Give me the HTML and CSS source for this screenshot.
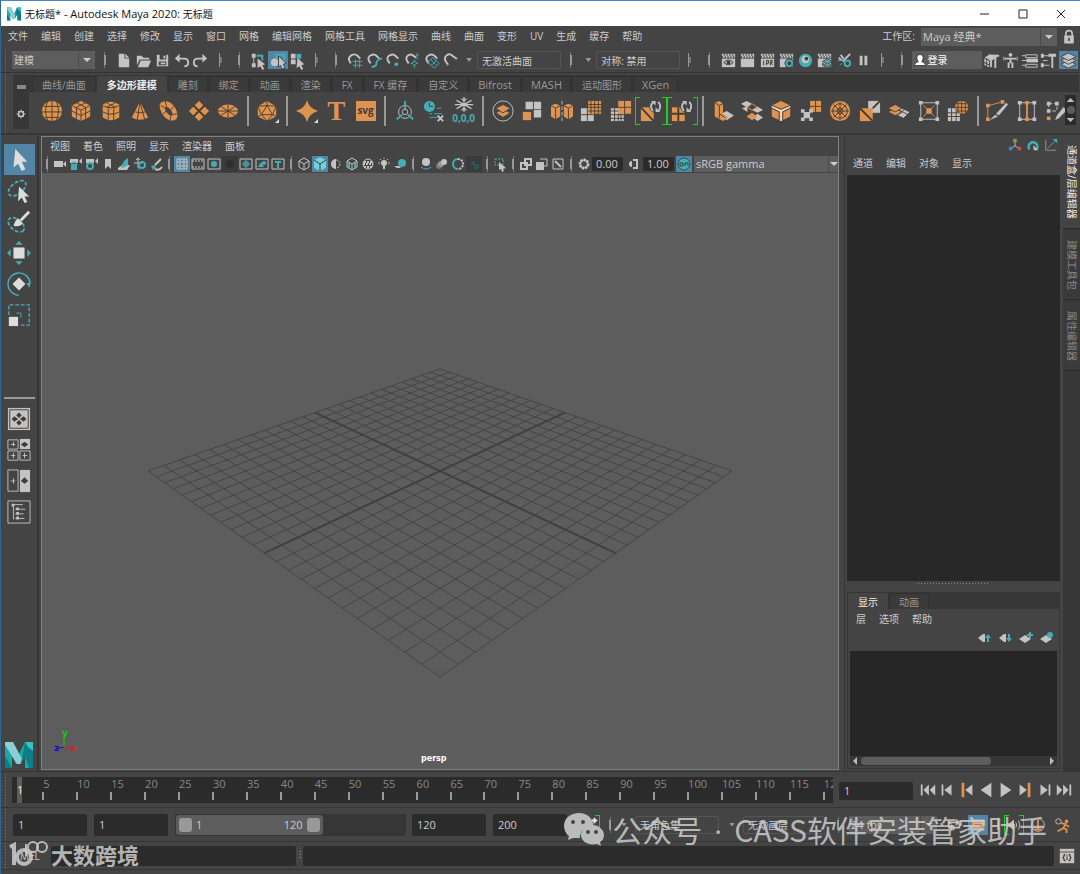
FILE: index.html
```html
<!DOCTYPE html>
<html lang="zh-CN">
<head>
    <meta charset="UTF-8">
    <meta name="viewport" content="width=device-width, initial-scale=1.0">
    <title>无标题* - Autodesk Maya 2020: 无标题</title>
    <link rel="stylesheet" href="styles.css">
</head>
<body>

<!-- icon set -->
<svg class="defs" aria-hidden="true">
    <symbol id="mlogo" viewBox="0 0 28 26"><path fill="#1aa7a8" d="M0 0h8l6 12 6-12h8v26h-8V14l-4 8h-5l-4-8v12H0z"/><path fill="#8fcdd6" d="M0 0h8l9 17-2 5h-3L0 3z"/><path fill="#0c7f86" d="M20 0l8 6v20h-4l-4-12-4 8zM0 14l7 12H0z"/><path fill="#35c3c0" d="M20 0h8v9l-5-4z"/></symbol>

    <!-- status line, 20x20 -->
    <symbol id="new" viewBox="0 0 20 20"><path class="g" d="M5 3h6v5h5v9H5zM12 3l4 4h-4z"/></symbol>
    <symbol id="open" viewBox="0 0 20 20"><path class="g" d="M3 5h5l2 2h6v2H6l-3 6zM7 10h11l-3 7H4z"/></symbol>
    <symbol id="save" viewBox="0 0 20 20"><path class="g" fill-rule="evenodd" d="M4 4h12v12H4zM7 4v5h7V4zM6 11v4h8v-4zM11 5h2v3h-2zM8 12h5v2H8z"/></symbol>
    <symbol id="undo" viewBox="0 0 20 20"><path class="lg w2" d="M6 8h7q4 0 4 4t-4 4"/><path class="g" d="M8 3v9L3 8z"/></symbol>
    <symbol id="redo" viewBox="0 0 20 20"><path class="lg w2" d="M14 8H7q-4 0-4 4t4 4"/><path class="g" d="M12 3v9l5-4z"/></symbol>
    <symbol id="selh" viewBox="0 0 20 20"><path class="g" d="M3 3h4v4H3zM3 13h4v4H3zM9 8l8 6-3 1 2 4-2 1-2-4-3 2z"/><path class="lg" d="M5 7v6"/><path class="lt w2" d="M8 5h6v5"/></symbol>
    <symbol id="selo" viewBox="0 0 20 20"><circle class="g" cx="6" cy="12" r="4"/><path class="lt w2" d="M8 8V4h8v6"/><path class="g dks" d="M10 5l8 8-3 1 2 4-3 1-2-4-2 2z"/></symbol>
    <symbol id="selc" viewBox="0 0 20 20"><path class="g" d="M3 3h5v5H3zM3 9h5v5H3z"/><path class="t" d="M9 3h5v5H9z"/><path class="g" d="M10 7l7 7-3 1 2 4-2 1-2-4-3 2z"/></symbol>
    <symbol id="magnet" viewBox="0 0 20 20"><path class="lg w2" d="M6 14L4 11C1 6 7 1 11 5l4 3"/><path d="M5 15l2-1M15 9l1-2" class="lg"/></symbol>
    <symbol id="mgrid" viewBox="0 0 20 20"><path class="lg w2" d="M5 13L3 9C3 4 9 2 12 5l3 3"/><path class="lt" d="M10 9v9M14 9v9M7 11h10M7 15h10"/></symbol>
    <symbol id="mcurve" viewBox="0 0 20 20"><path class="lg w2" d="M6 13L4 10C2 5 9 2 12 5l3 3"/><path class="lt w2" d="M7 17q6-1 5-5 2-4 6-4"/></symbol>
    <symbol id="mpoint" viewBox="0 0 20 20"><path class="lg w2" d="M6 13L4 10C2 5 9 2 12 5l3 3"/><circle class="t" cx="13" cy="14" r="2"/></symbol>
    <symbol id="mproj" viewBox="0 0 20 20"><path class="lg w2" d="M6 13L4 10C2 5 8 2 11 5l3 2"/><circle class="lt" cx="12" cy="13" r="2"/><circle class="lt" cx="15" cy="4" r="1"/><path class="lt" d="M12 9v2M12 15v3M8 13h2M14 13h2M15 7v2"/></symbol>
    <symbol id="mplane" viewBox="0 0 20 20"><path class="lg w2" d="M6 13L4 10C2 5 9 2 12 5l3 3"/><path class="lt" d="M5 12l5-5 7 6-5 5zM9 15l5-5M8 9l6 6"/></symbol>
    <symbol id="clap" viewBox="0 0 20 20"><path class="g" d="M3 8h14v9H3z"/><path class="lg w2 clapd" d="M3 4h14M4 6h13"/></symbol>
    <symbol id="rview" viewBox="0 0 20 20"><use href="#clap"/><path class="ld" d="M5 12q5-5 10 0-5 5-10 0z"/><circle cx="10" cy="12" r="2" class="d"/></symbol>
    <symbol id="ripr" viewBox="0 0 20 20"><use href="#clap"/><path class="ld" d="M6 10v5M9 15v-5h2v3H9M13 15v-5h2v2h-2M14 12l1 3"/></symbol>
    <symbol id="rset" viewBox="0 0 20 20"><use href="#clap"/><circle class="d" cx="13" cy="13" r="5"/><circle class="lt w2" cx="13" cy="13" r="3"/></symbol>
    <symbol id="hyper" viewBox="0 0 20 20"><circle class="t" cx="10" cy="10" r="7"/><circle class="g" cx="10" cy="9" r="4"/><circle class="d" cx="11" cy="8" r="2"/></symbol>
    <symbol id="rlayer" viewBox="0 0 20 20"><use href="#clap"/><path class="t dks" d="M13 8l5 3-5 3-5-3zM8 13l5 3 5-3v2l-5 3-5-3z"/></symbol>
    <symbol id="light" viewBox="0 0 20 20"><path class="lg w2" d="M8 11l8-8M4 7l3 3M6 4l3 4"/><circle class="lt w2" cx="13" cy="13" r="3"/><path class="lt" d="M3 10h4M5 15l2-2"/></symbol>
    <symbol id="pause" viewBox="0 0 20 20"><path class="g" d="M6 5h3v10H6zM11 5h3v10h-3z"/></symbol>
    <symbol id="user" viewBox="0 0 20 20"><path fill="#fff" stroke="#222" d="M10 3q4 0 4 4t-2 5q5 1 5 5H3q0-4 5-5-2-1-2-5t4-4z"/></symbol>
    <symbol id="boxham" viewBox="0 0 20 20"><path class="g dks" d="M2 7l6-4 8 1v3l-5 3v7l-3 1-6-3z"/><path class="lg w2" d="M11 5h7M14 6v12"/><path class="ld" d="M2 7l6 3v8M5 8v8M2 12l6 3"/></symbol>
    <symbol id="human" viewBox="0 0 20 20"><circle class="g" cx="10" cy="4" r="2"/><path class="lg w2" d="M4 8h12M10 7v6M8 18v-6M12 18v-6"/><path class="lg" d="M3 6v4M17 6v4"/></symbol>
    <symbol id="attr" viewBox="0 0 20 20"><path class="lg" d="M6 4h12v3H6zM6 14h12v3H6zM2 5h4M2 15h4M2 10h6"/><path class="g" d="M7 8h12v4H7z"/></symbol>
    <symbol id="toolset" viewBox="0 0 20 20"><path class="lg" d="M4 5h7M4 15h7M4 10h5"/><path class="g" d="M2 3h3v4H2zM2 13h3v4H2zM10 3h8v3h-3v12h-2V6h-3z"/></symbol>
    <symbol id="layers" viewBox="0 0 20 20"><path class="g dks" d="M10 10l8 4-8 4-8-4z"/><path class="g dks" d="M10 6l8 4-8 4-8-4z"/><path class="g dks" d="M10 2l8 4-8 4-8-4z"/></symbol>
    <symbol id="lock" viewBox="0 0 20 20"><path class="lg w2" d="M6 9V6q0-4 4-4t4 4v3"/><path class="g" fill-rule="evenodd" d="M4 8h12v10H4zM9 11v4h2v-4z"/></symbol>
    <symbol id="gear" viewBox="0 0 20 20"><circle class="lg w3" cx="10" cy="10" r="5"/><path class="lg w2" d="M10 1v3M10 16v3M1 10h3M16 10h3M4 4l2 2M14 14l2 2M16 4l-2 2M6 14l-2 2"/></symbol>

    <!-- shelf, 24x24 -->
    <symbol id="sphere" viewBox="0 0 24 24"><circle class="o" cx="12" cy="12" r="11"/><path class="ld" d="M3 7h18M1 13h22M12 1v22M7 2q-4 10 0 20M17 2q4 10 0 20M4 19h16"/></symbol>
    <symbol id="cube" viewBox="0 0 24 24"><path class="o" d="M12 1l10 5v12l-10 5-10-5V6z"/><path class="ld" d="M2 6l10 5 10-5M12 11v12M7 3l10 5v12M17 3L7 8v12M2 12l10 5 10-5"/></symbol>
    <symbol id="cyl" viewBox="0 0 24 24"><path class="o" d="M3 5q9-6 18 0v14q-9 6-18 0z"/><path class="ld" d="M3 6q9 5 18 0M3 13q9 5 18 0M9 9v13M15 9v13M7 3l10 5M17 3L7 8"/></symbol>
    <symbol id="cone" viewBox="0 0 24 24"><path class="o" d="M12 2l9 17q-9 5-18 0z"/><path class="ld" d="M12 2L9 22M12 2l5 19M7 13q5 2 11 0"/></symbol>
    <symbol id="torus" viewBox="0 0 24 24"><path class="o" fill-rule="evenodd" d="M5 2q8-3 14 7 5 10-1 13-9 2-14-8-5-10 1-12zM9 7q-3 1 0 6 4 5 6 4 2-2-1-6-3-4-5-4z"/><path class="ld" d="M3 6l5 3M8 1l1 6M17 7l-3 4M21 15l-6 1M13 22l1-5M5 16l4-4"/></symbol>
    <symbol id="plane" viewBox="0 0 24 24"><path class="o" d="M12 1l11 11-11 11L1 12z"/><path class="ld w2" d="M6 6l12 12M18 6L6 18"/></symbol>
    <symbol id="disc" viewBox="0 0 24 24"><ellipse class="o" cx="12" cy="12" rx="11" ry="7"/><path class="ld" d="M12 5v14M1 12h22M4 7l16 10M20 7L4 17"/></symbol>
    <symbol id="platon" viewBox="0 0 24 24"><path class="o" d="M12 1l10 6v11l-10 5-10-5V7z"/><path class="ld" d="M2 7l10-1 10 1M12 1v5M12 6L6 16h12zM2 7l4 9-4 2M22 7l-4 9 4 2M6 16l6 7 6-7"/></symbol>
    <symbol id="star" viewBox="0 0 24 24"><path class="o" d="M12 0q2 9 12 12-10 3-12 12Q10 15 0 12 10 9 12 0z"/></symbol>
    <symbol id="pivot" viewBox="0 0 24 24"><circle class="lg" cx="12" cy="13" r="7"/><circle class="lg" cx="12" cy="13" r="3"/><path class="lt w2" d="M12 1v9M3 21l6-5M21 21l-6-5"/></symbol>
    <symbol id="hist" viewBox="0 0 24 24"><circle class="t" cx="7" cy="7" r="6"/><path class="ld" d="M7 3v4h4"/><path class="lt" d="M15 9h5M7 15h3M12 15h9M7 19h9"/><path class="lg w2" d="M16 17l6 6M22 17l-6 6"/></symbol>
    <symbol id="freeze" viewBox="0 0 24 18"><path class="lg" stroke-width="1.5" d="M12 0v18M3 4l18 10M21 4L3 14M1 9h22M9 2l3 3 3-3M9 16l3-3 3 3"/></symbol>
    <symbol id="combine" viewBox="0 0 24 24"><circle class="lg" cx="12" cy="12" r="11"/><path class="o dks" d="M12 10l8 4-8 5-8-5z"/><path class="o dks" d="M12 5l8 4-8 5-8-5z"/></symbol>
    <symbol id="separate" viewBox="0 0 24 24"><path class="g" d="M5 2h8v8H5zM14 2h8v8h-8zM14 11h8v8h-8z"/><path class="o" d="M2 13h9v9H2z"/></symbol>
    <symbol id="mirror" viewBox="0 0 24 24"><path class="o" d="M5 4l5 2v12l-5 3-5-3V6zM19 4l5 2v12l-5 3-5-3V6z"/><path class="ld" d="M0 6l5 3 5-3M5 9v12M14 6l5 3 5-3M19 9v12"/><path class="lg dash" d="M12 1v22"/></symbol>
    <symbol id="smooth" viewBox="0 0 24 24"><path class="g" d="M1 9h14v14H1z"/><path class="ld" d="M8 9v14M1 16h14"/><path class="o" d="M9 1h14v14H9z"/><path class="ld" d="M9 5h14M9 8h14M9 12h14M12 1v14M16 1v14M20 1v14"/></symbol>
    <symbol id="reduce" viewBox="0 0 24 24"><path class="g" d="M1 9h14v14H1z"/><path class="o" d="M9 1h14v14H9z"/><path class="ld" d="M16 1v14M9 8h14M1 12h8M1 16h14M1 20h14M5 9v14M9 15v8M12 15v8"/></symbol>
    <symbol id="remesh" viewBox="0 0 24 24"><path class="o" d="M1 8h14v15H1z"/><path class="ld w2" d="M1 8l14 15"/><circle class="bg" cx="17" cy="7" r="7"/><path class="lg w2" d="M14 12q-4-6 0-9M20 2q4 5 0 10"/><path class="g" d="M12 1h5v5zM22 13h-5V8z"/></symbol>
    <symbol id="retopo" viewBox="0 0 24 24"><path class="o" d="M1 8h14v15H1z"/><path class="ld w2" d="M8 8v15M1 15h14"/><circle class="bg" cx="17" cy="7" r="7"/><path class="lg w2" d="M14 12q-4-6 0-9M20 2q4 5 0 10"/><path class="g" d="M12 1h5v5zM22 13h-5V8z"/></symbol>
    <symbol id="extrude" viewBox="0 0 24 24"><path class="g" d="M10 15l6-3 8 5-8 5z"/><path class="o" d="M3 3l5-2 4 3v11l6 4-6 4-9-5z"/><path class="ld" d="M3 3l5 3 4-2M8 6v14M8 15l6 4"/></symbol>
    <symbol id="bridge" viewBox="0 0 24 24"><path class="g" d="M6 1l6 3-6 4-6-4zM18 7l6 4-6 3-6-3zM7 13l-6-4 6-2zM18 15l6 4-6 4-5-4z"/><path class="o" d="M12 14l6 4-6 4-6-4z"/><path class="lo" d="M12 4l6 4-6 3-5-3z"/></symbol>
    <symbol id="bevel" viewBox="0 0 24 24"><path class="o" d="M12 1l10 5v12l-10 5-10-5V6z"/><path d="M2 7l10 5 10-5M12 12v11" fill="none" stroke="#ddd" stroke-width="2"/><path class="ld" d="M2 9l8 4v9M22 9l-8 4v9M2 6l10 4 10-4"/></symbol>
    <symbol id="append" viewBox="0 0 24 24"><path class="o" d="M11 1h12v12H11z"/><path class="ld" d="M11 7h6v6M17 1v6h6"/><path class="g" d="M1 10h4v3h5v-3h4v4h-3v5h3v4h-4v-3H5v3H1v-4h3v-5H1z"/></symbol>
    <symbol id="fill" viewBox="0 0 24 24"><circle class="o" cx="12" cy="12" r="11"/><circle class="ld" cx="12" cy="12" r="8"/><circle class="ld" cx="12" cy="12" r="3"/><path class="ld" d="M12 2v20M2 12h20M5 5l14 14M19 5L5 19"/></symbol>
    <symbol id="wedge" viewBox="0 0 24 24"><path class="g" d="M10 1h13v13H10z"/><path class="o" d="M1 9h14v14H1z"/><path class="ld w2" d="M1 9l14 14M23 1l-8 8"/></symbol>
    <symbol id="merge" viewBox="0 0 24 24"><path class="g dks" d="M13 8l11 5-7 7-11-5z"/><path class="ld" d="M18 10l-7 7M10 10l12 6"/><path class="o dks" d="M8 9l7 4-7 4-8-4z"/><path class="o dks" d="M8 5l7 4-7 4-8-4z"/></symbol>
    <symbol id="lattice" viewBox="0 0 24 24"><path class="lg" d="M3 3h18v18H3z"/><path class="lo" d="M6 6l12 12M18 6L6 18"/><path class="o" d="M9 9h6v6H9z"/><path class="g" d="M1 1h4v4H1zM19 1h4v4h-4zM1 19h4v4H1zM19 19h4v4h-4z"/></symbol>
    <symbol id="wrap" viewBox="0 0 24 24"><path class="g" d="M1 9h13v14H1z"/><circle class="o" cx="16" cy="8" r="7"/><path class="ld" d="M5 9v14M10 9v14M1 14h13M1 18h13M9 8h14M16 1v14M11 4h10M11 12h10M12 3v10M20 3v10"/></symbol>
    <symbol id="pencut" viewBox="0 0 24 24"><path class="lo" d="M3 6l15-4M2 6v14"/><path class="o" d="M0 4h4v4H0zM0 19h4v4H0zM16 0h4v4h-4z"/><path class="g" d="M22 3l2 2-10 12-3-2zM10 16l3 2-9 4z"/></symbol>
    <symbol id="edgeloop" viewBox="0 0 24 24"><path class="lg" d="M4 3h16v18H4z"/><path class="lo w2" d="M12 3v18"/><path class="o" d="M10 1h4v4h-4zM10 19h4v4h-4z"/><path class="g" d="M2 1h4v4H2zM18 1h4v4h-4zM2 19h4v4H2zM18 19h4v4h-4z"/></symbol>
    <symbol id="quad" viewBox="0 0 24 24"><path class="lg dash" d="M4 4h9v8H4z"/><path class="g" d="M2 2h4v4H2zM11 2h4v4h-4zM2 10h4v4H2zM20 8l4 3-9 9-4 2 2-5z"/><path class="o" d="M2 18h4v4H2z"/></symbol>

    <!-- toolbox, 26x26 -->
    <symbol id="arrow" viewBox="0 0 26 26"><path d="M9 1l13 14h-6l4 8-4 2-4-8-5 4z" fill="#ddd"/></symbol>
    <symbol id="lasso" viewBox="0 0 26 26"><ellipse class="lt w2 dash" cx="11" cy="10" rx="11" ry="6" transform="rotate(-38 11 10)"/><path fill="#ddd" d="M13 8l11 11h-5l3 6-3 1-3-6-4 4z"/></symbol>
    <symbol id="paint" viewBox="0 0 26 26"><ellipse class="lt w2 dash" cx="10" cy="16" rx="10" ry="6" transform="rotate(38 10 16)"/><path d="M24 2L15 11" stroke="#ddd" stroke-width="3"/><path fill="#ddd" d="M12 9l5 5q-3 5-10 3 2-6 5-8z"/></symbol>
    <symbol id="move" viewBox="0 0 26 26"><path fill="#ddd" d="M7 7h12v12H7z"/><path class="t" d="M13 0l4 4H9zM13 26l4-4H9zM0 13l4-4v8zM26 13l-4-4v8z"/></symbol>
    <symbol id="rotate" viewBox="0 0 26 26"><path class="lt" stroke-width="1.500" d="M13 25A12 12 0 1 1 25 12"/><path class="t" d="M21 12h5l-2 5z"/><path fill="#ddd" d="M13 6l7 7-7 7-7-7z"/></symbol>
    <symbol id="scale" viewBox="0 0 26 26"><path class="lt dash" stroke-width="1.500" d="M2 13V2h22v22H14"/><path fill="#ddd" d="M2 15h10v10H2z"/><path class="lt" d="M10 11h5v5"/></symbol>
    <symbol id="lay1" viewBox="0 0 26 26"><path class="g" d="M1 1h24v24H1z"/><path class="ld" d="M3 3h20v20H3z"/><path class="d" d="M13 6l3 3-3 3-3-3zM13 14l3 3-3 3-3-3zM8 10l4 3-4 3-3-3zM18 10l3 3-3 3-4-3z"/></symbol>
    <symbol id="lay4" viewBox="0 0 26 26"><path class="lg" d="M1 2h11v10H1zM1 14h11v10H1zM14 14h11v10H14zM4 7h5M7 4v5M4 19h5M7 16v6M17 19h5M19 16v6"/><path class="g" d="M14 1h11v11H14z"/><path class="d" d="M19 4l4 3-4 3-4-3z"/></symbol>
    <symbol id="lay2" viewBox="0 0 26 26"><path class="lg" d="M1 1h11v23H1zM4 13h5M7 10v6"/><path class="g" d="M14 1h11v24H14z"/><path class="d" d="M19 9l4 4-4 3-4-3z"/></symbol>
    <symbol id="outl" viewBox="0 0 26 26"><path class="lg" d="M1 1h24v24H1zM7 5v16M6 5h11M9 10h11M9 15h9M9 20h10"/><path class="g" d="M5 4h3v3H5zM10 8h3v3h-3zM10 13h3v3h-3zM10 18h3v3h-3z"/></symbol>

    <!-- panel toolbar, 16x16 -->
    <symbol id="cam" viewBox="0 0 16 16"><path class="g" d="M2 5h9v6H2zM11 8l3-3v6z"/></symbol>
    <symbol id="camlock" viewBox="0 0 16 16"><path class="g" d="M2 3h8v4H2zM11 5l3-3v6z"/><path class="t" d="M3 8h6v6H3z"/><path class="lt" d="M4 8V6h4v2"/></symbol>
    <symbol id="camset" viewBox="0 0 16 16"><path class="g" d="M2 3h8v4H2zM11 5l3-3v6z"/><circle class="lt w2" cx="6" cy="10" r="3"/></symbol>
    <symbol id="bkmk" viewBox="0 0 16 16"><path class="g" d="M5 3h6v10l-3-3-3 3z"/></symbol>
    <symbol id="imgp" viewBox="0 0 16 16"><path class="g" d="M2 12l4-3h8l-3 5H2z"/><path class="t" d="M5 11l3-6 4-3v7l-5 3z"/></symbol>
    <symbol id="pan" viewBox="0 0 16 16"><path class="lg" d="M2 7h8M6 3v9M4 4l2-2 2 2"/><circle class="lt w2" cx="10" cy="9" r="3"/><path class="lt" d="M8 11l-2 3"/></symbol>
    <symbol id="gp" viewBox="0 0 16 16"><path class="lg w2" d="M13 3L7 9M7 13q4 2 7-2"/><path class="t" d="M3 10l4-1 1 2-3 3z"/></symbol>
    <symbol id="grid" viewBox="0 0 16 16"><path class="lg" d="M3 3h10v10H3zM6 3v10M10 3v10M3 6h10M3 10h10"/></symbol>
    <symbol id="film" viewBox="0 0 16 16"><path class="lg" d="M2 3h12v10H2z"/><path class="lg dash1" d="M2 5h12M2 11h12"/></symbol>
    <symbol id="resg" viewBox="0 0 16 16"><path class="lg" d="M2 3h12v10H2z"/><circle class="t" cx="8" cy="8" r="3"/></symbol>
    <symbol id="gmask" viewBox="0 0 16 16"><circle fill="#2f2f2f" cx="8" cy="8" r="4"/></symbol>
    <symbol id="fchart" viewBox="0 0 16 16"><path class="lg" d="M2 3h12v10H2z"/><path class="lt" d="M8 4v8M4 8h8M6 6h4v4H6z"/></symbol>
    <symbol id="safea" viewBox="0 0 16 16"><path class="lg" d="M2 3h12v10H2z"/><path class="t" d="M4 11l3-5 3 5z"/><circle class="t" cx="10" cy="7" r="2"/></symbol>
    <symbol id="safet" viewBox="0 0 16 16"><path class="lg" d="M2 3h12v10H2z"/><path class="lt w2" d="M5 6h6M8 6v6"/></symbol>
    <symbol id="wire" viewBox="0 0 16 16"><path class="lg" d="M8 2l5 3v6l-5 3-5-3V5zM3 5l5 3 5-3M8 8v6"/></symbol>
    <symbol id="shade" viewBox="0 0 16 16"><path fill="#6fd0de" d="M8 1l6 3v8l-6 3-6-3V4z"/><path class="ld" d="M2 4l6 4 6-4M8 8v7"/></symbol>
    <symbol id="mat" viewBox="0 0 16 16"><path class="g" d="M8 3a5 5 0 0 0 0 10z"/><circle class="lg dash1" cx="8" cy="8" r="4"/></symbol>
    <symbol id="wshade" viewBox="0 0 16 16"><path class="lg" d="M8 2l5 3v6l-5 3-5-3V5zM3 5l5 3 5-3M8 8v6"/><path class="lt w2" d="M5 7v5M11 7v5"/></symbol>
    <symbol id="tex" viewBox="0 0 16 16"><circle class="lg" cx="8" cy="8" r="5"/><path class="lg dash1" stroke-width="2" d="M4 6h8M3 8h10M4 11h8"/></symbol>
    <symbol id="bulb" viewBox="0 0 16 16"><circle class="g" cx="8" cy="7" r="3"/><path class="g" d="M7 9h2v4H7z"/><path class="lg" d="M2 7h2M12 7h2M4 3l1 1M12 3l-1 1M8 2v1"/></symbol>
    <symbol id="shadow" viewBox="0 0 16 16"><circle class="t" cx="10" cy="7" r="4"/><path class="g" d="M2 10h5l2 2H5z"/></symbol>
    <symbol id="ao" viewBox="0 0 16 16"><circle class="g" cx="8" cy="6" r="4"/><path class="lt" d="M3 11q5 4 10 0"/></symbol>
    <symbol id="mblur" viewBox="0 0 16 16"><circle fill="#777" cx="5" cy="10" r="3"/><circle fill="#999" cx="7" cy="8" r="3"/><circle class="g" cx="10" cy="6" r="3"/></symbol>
    <symbol id="aa" viewBox="0 0 16 16"><path class="lt w2" d="M8 3a5 5 0 0 0 0 10"/><path class="lg w2 dash1" d="M8 3a5 5 0 0 1 0 10"/></symbol>
    <symbol id="dof" viewBox="0 0 16 16"><path fill="#2f5456" d="M5 5h4v4H5zM8 8h5v5H8z"/></symbol>
    <symbol id="iso" viewBox="0 0 16 16"><path class="lt dash1" d="M3 3h8v6H3z"/><path class="g" d="M7 6l7 6-3 1 1 2-2 1-1-3-2 1z"/></symbol>
    <symbol id="xr1" viewBox="0 0 16 16"><path class="lg w2" d="M3 7h6v6H3zM7 3h6v6H7z"/></symbol>
    <symbol id="xr2" viewBox="0 0 16 16"><path class="g" d="M2 6h8v8H2z"/><path class="lg" d="M6 3h7v7h-3"/></symbol>
    <symbol id="xr3" viewBox="0 0 16 16"><path class="lg" d="M3 3h10v10H3z"/><path class="lg w2" d="M5 5l6 6"/></symbol>
    <symbol id="expo" viewBox="0 0 16 16"><circle class="lg w3 dash1" cx="8" cy="8" r="4"/><circle class="lg" cx="8" cy="8" r="4"/></symbol>
    <symbol id="gam" viewBox="0 0 16 16"><path class="g" d="M7 5a3 3 0 0 0 0 6z"/><path class="lg w2" d="M8 4h4v8H8"/></symbol>
    <symbol id="on" viewBox="0 0 16 16"><circle cx="8" cy="8" r="6" fill="#3fb0b9" stroke="#26555f"/><path class="ld" d="M4 7h3v3H4zM9 10V7h3v3"/></symbol>

    <!-- channel box and layers -->
    <symbol id="cb1" viewBox="0 0 16 16"><path class="lg" d="M8 4v5l-5 3M8 9l5 3"/><path fill="#7ba23f" d="M6 1h4v4H6z"/><path fill="#4a7fd0" d="M1 10h4v4H1z"/><path fill="#d05050" d="M11 10h4v4h-4z"/></symbol>
    <symbol id="cb2" viewBox="0 0 16 16"><path class="lt w3" d="M4 13a5 5 0 1 1 8 0"/><path class="g" d="M8 8l6 6h-5z"/></symbol>
    <symbol id="cb3" viewBox="0 0 16 16"><path stroke="#999" fill="none" d="M2 2v12h12"/><path class="lt" d="M4 12l9-9"/><path class="t" d="M15 1v5l-5-5z"/></symbol>
    <symbol id="lup" viewBox="0 0 16 16"><path class="g" d="M2 8l5-4h2v8H7z"/><path class="t" d="M12 4l3 4h-2v4h-2V8H9z"/></symbol>
    <symbol id="ldown" viewBox="0 0 16 16"><path class="g" d="M2 8l5-4h2v8H7z"/><path class="t" d="M12 12l3-4h-2V4h-2v4H9z"/></symbol>
    <symbol id="ladd" viewBox="0 0 16 16"><path class="g" d="M1 9l6-4 6 4-6 4z"/><path class="lt w2" d="M12 2v6M9 5h6"/></symbol>
    <symbol id="lsel" viewBox="0 0 16 16"><path class="g" d="M1 9l6-4 6 4-6 4z"/><circle class="t" cx="11" cy="5" r="3"/></symbol>

    <!-- playback -->
    <symbol id="pstart" viewBox="0 0 20 20"><path class="g" d="M2 4h2v12H2zM11 4v12l-6-6zM18 4v12l-6-6z"/></symbol>
    <symbol id="pback" viewBox="0 0 20 20"><path class="g" d="M4 4h2v12H4zM15 4v12l-8-6z"/></symbol>
    <symbol id="pkeyb" viewBox="0 0 20 20"><path class="o" d="M4 2h3v16H4z"/><path class="g" d="M16 4v12l-8-6z"/></symbol>
    <symbol id="prev" viewBox="0 0 20 20"><path class="g" d="M16 2v16L4 10z"/></symbol>
    <symbol id="play" viewBox="0 0 20 20"><path class="g" d="M4 2v16l12-8z"/></symbol>
    <symbol id="pkeyf" viewBox="0 0 20 20"><path class="o" d="M13 2h3v16h-3z"/><path class="g" d="M4 4v12l8-6z"/></symbol>
    <symbol id="pfwd" viewBox="0 0 20 20"><path class="g" d="M14 4h2v12h-2zM5 4v12l8-6z"/></symbol>
    <symbol id="pend" viewBox="0 0 20 20"><path class="g" d="M16 4h2v12h-2zM2 4v12l6-6zM9 4v12l6-6z"/></symbol>
    <symbol id="key" viewBox="0 0 20 20"><path fill="#f08050" d="M6 4l8 4v8H8L4 10z"/><path d="M12 5h6M15 2v6" stroke="#eee" stroke-width="2"/></symbol>
    <symbol id="loop" viewBox="0 0 20 20"><path class="lg w2" d="M4 12V7h9M16 8v5H7"/><path class="g" d="M12 3l5 4-5 4zM8 9v8l-5-4z"/></symbol>
    <symbol id="cache" viewBox="0 0 20 20"><path class="o" d="M3 5h14v10H3z"/><path class="lg w2" d="M3 5h14M3 15h14M5 9h10"/><path class="ld" d="M6 10h8"/></symbol>
    <symbol id="sound" viewBox="0 0 20 20"><path class="g" d="M2 8h3l5-4v12l-5-4H2z"/><path class="lg" d="M12 7q2 3 0 6M15 5q3 5 0 10"/></symbol>
    <symbol id="clock" viewBox="0 0 20 20"><circle class="lg" cx="10" cy="10" r="7"/><path class="lo w2" d="M10 4v11M6 15h8"/></symbol>
    <symbol id="run" viewBox="0 0 20 20"><circle class="lg" cx="6" cy="6" r="3"/><circle class="o" cx="15" cy="6" r="2"/><path class="lo w2" d="M9 8l5 1-3 5-6 3M11 13l4 2v4M14 10l4 2"/></symbol>
    <symbol id="script" viewBox="0 0 20 20"><path class="g" d="M1 1h18v18H1z"/><path class="ld" d="M1 5h18"/><path class="ld" stroke-width="1.500" d="M8 8Q6 8 6 11l-1 1 1 1q0 3 2 3M12 8q2 0 2 3l1 1-1 1q0 3-2 3M10 9v2M10 12v3"/></symbol>
</svg>

<div class="window">
    <header class="titlebar">
        <svg class="i14"><use href="#mlogo"/></svg>
        <h1>无标题<span class="en">* - Autodesk Maya 2020: </span>无标题</h1>
        <div class="winbtns">
            <button title="最小化"><svg viewBox="0 0 10 10"><path d="M0 5h9"/></svg></button>
            <button title="最大化"><svg viewBox="0 0 10 10"><path d="M1 1h8v8H1z"/></svg></button>
            <button title="关闭"><svg viewBox="0 0 10 10"><path d="M1 1l8 8M9 1L1 9"/></svg></button>
        </div>
    </header>

    <div class="menubar">
        <nav class="menu">
            <a href="#">文件</a><a href="#">编辑</a><a href="#">创建</a><a href="#">选择</a><a href="#">修改</a><a href="#">显示</a><a href="#">窗口</a><a href="#">网格</a><a href="#">编辑网格</a><a href="#">网格工具</a><a href="#">网格显示</a><a href="#">曲线</a><a href="#">曲面</a><a href="#">变形</a><a href="#">UV</a><a href="#">生成</a><a href="#">缓存</a><a href="#">帮助</a>
        </nav>
        <label for="workspace">工作区:</label>
        <div class="combo workspace"><select id="workspace"><option>Maya 经典*</option></select></div>
        <button class="lock" title="锁定"><svg class="i16"><use href="#lock"/></svg></button>
    </div>

    <div class="status">
        <div class="combo mode"><select aria-label="菜单集"><option>建模</option></select></div>
        <i class="bar"></i>
        <button title="新建"><svg><use href="#new"/></svg></button>
        <button title="打开"><svg><use href="#open"/></svg></button>
        <button title="保存"><svg><use href="#save"/></svg></button>
        <button title="撤销"><svg><use href="#undo"/></svg></button>
        <button title="重做"><svg><use href="#redo"/></svg></button>
        <i class="bar tip"></i>
        <i class="bar"></i>
        <button title="按层次选择"><svg><use href="#selh"/></svg></button>
        <button class="on" title="按对象选择"><svg><use href="#selo"/></svg></button>
        <button title="按组件选择"><svg><use href="#selc"/></svg></button>
        <i class="bar tip"></i>
        <i class="bar"></i>
        <button title="捕捉到栅格"><svg><use href="#mgrid"/></svg></button>
        <button title="捕捉到曲线"><svg><use href="#mcurve"/></svg></button>
        <button title="捕捉到点"><svg><use href="#mpoint"/></svg></button>
        <button title="捕捉到投影中心"><svg><use href="#mproj"/></svg></button>
        <button title="捕捉到平面"><svg><use href="#mplane"/></svg></button>
        <button title="激活曲面"><svg><use href="#magnet"/></svg></button>
        <i class="caret"></i>
        <input class="box" type="text" value="无激活曲面" aria-label="激活曲面">
        <i class="bar"></i>
        <i class="caret"></i>
        <input class="box" type="text" value="对称: 禁用" aria-label="对称">
        <i class="bar tip"></i>
        <i class="bar"></i>
        <button title="渲染视图"><svg><use href="#rview"/></svg></button>
        <button title="渲染当前帧"><svg><use href="#clap"/></svg></button>
        <button title="IPR 渲染"><svg><use href="#ripr"/></svg></button>
        <button title="渲染设置"><svg><use href="#rset"/></svg></button>
        <button title="Hypershade"><svg><use href="#hyper"/></svg></button>
        <button title="渲染设置编辑器"><svg><use href="#rlayer"/></svg></button>
        <button title="灯光编辑器"><svg><use href="#light"/></svg></button>
        <button title="暂停"><svg><use href="#pause"/></svg></button>
        <i class="bar tip"></i>
        <i class="bar"></i>
        <button class="login"><svg><use href="#user"/></svg>登录</button>
        <button title="建模工具包"><svg><use href="#boxham"/></svg></button>
        <button title="角色控制"><svg><use href="#human"/></svg></button>
        <button title="属性编辑器"><svg><use href="#attr"/></svg></button>
        <button title="工具设置"><svg><use href="#toolset"/></svg></button>
        <button class="on" title="通道盒"><svg><use href="#layers"/></svg></button>
    </div>

    <div class="shelf">
        <div class="shelf-side"><button class="dash-btn" title="工具架"></button><button title="选项"><svg><use href="#gear"/></svg></button></div>
        <div class="shelf-main">
            <div class="tabs">
                <button>曲线/曲面</button><button class="active">多边形建模</button><button>雕刻</button><button>绑定</button><button>动画</button><button>渲染</button><button>FX</button><button>FX 缓存</button><button>自定义</button><button class="en">Bifrost</button><button class="en">MASH</button><button>运动图形</button><button class="en">XGen</button>
            </div>
            <div class="tools">
                <div class="shelf-icons">
                    <button title="球体"><svg><use href="#sphere"/></svg></button>
                    <button title="立方体"><svg><use href="#cube"/></svg></button>
                    <button title="圆柱体"><svg><use href="#cyl"/></svg></button>
                    <button title="圆锥体"><svg><use href="#cone"/></svg></button>
                    <button title="圆环"><svg><use href="#torus"/></svg></button>
                    <button title="平面"><svg><use href="#plane"/></svg></button>
                    <button title="圆盘"><svg><use href="#disc"/></svg></button>
                    <i></i>
                    <button class="more" title="柏拉图多面体"><svg><use href="#platon"/></svg></button>
                    <i></i>
                    <button class="more" title="超形状"><svg><use href="#star"/></svg></button>
                    <button class="type" title="类型">T</button>
                    <button title="SVG"><span class="svgtag">svg</span></button>
                    <i></i>
                    <button title="枢轴"><svg><use href="#pivot"/></svg></button>
                    <button title="删除历史"><svg><use href="#hist"/></svg></button>
                    <button class="freeze" title="冻结变换"><svg><use href="#freeze"/></svg><span>0,0,0</span></button>
                    <i></i>
                    <button title="结合"><svg><use href="#combine"/></svg></button>
                    <button title="分离"><svg><use href="#separate"/></svg></button>
                    <button title="镜像"><svg><use href="#mirror"/></svg></button>
                    <button title="平滑"><svg><use href="#smooth"/></svg></button>
                    <button title="减少"><svg><use href="#reduce"/></svg></button>
                    <button class="fresh" title="重新划分网格"><svg><use href="#remesh"/></svg></button>
                    <button class="fresh" title="重新拓扑"><svg><use href="#retopo"/></svg></button>
                    <i></i>
                    <button title="挤出"><svg><use href="#extrude"/></svg></button>
                    <button title="桥接"><svg><use href="#bridge"/></svg></button>
                    <button title="倒角"><svg><use href="#bevel"/></svg></button>
                    <button title="附加"><svg><use href="#append"/></svg></button>
                    <button title="填充洞"><svg><use href="#fill"/></svg></button>
                    <button title="楔形"><svg><use href="#wedge"/></svg></button>
                    <button title="合并"><svg><use href="#merge"/></svg></button>
                    <button title="晶格"><svg><use href="#lattice"/></svg></button>
                    <button title="包裹"><svg><use href="#wrap"/></svg></button>
                    <i></i>
                    <button title="多切割"><svg><use href="#pencut"/></svg></button>
                    <button title="插入循环边"><svg><use href="#edgeloop"/></svg></button>
                    <button title="四边形绘制"><svg><use href="#quad"/></svg></button>
                </div>
                <div class="scroller"><b class="up"></b><b class="dot"></b><b class="down"></b></div>
            </div>
        </div>
    </div>

    <main class="work">
        <aside class="toolbox">
            <button class="on" title="选择"><svg><use href="#arrow"/></svg></button>
            <button title="套索"><svg><use href="#lasso"/></svg></button>
            <button title="绘制选择"><svg><use href="#paint"/></svg></button>
            <button title="移动"><svg><use href="#move"/></svg></button>
            <button title="旋转"><svg><use href="#rotate"/></svg></button>
            <button title="缩放"><svg><use href="#scale"/></svg></button>
            <hr>
            <button title="单视图"><svg><use href="#lay1"/></svg></button>
            <button title="四视图"><svg><use href="#lay4"/></svg></button>
            <button title="双视图"><svg><use href="#lay2"/></svg></button>
            <button title="大纲视图"><svg><use href="#outl"/></svg></button>
            <svg class="biglogo"><use href="#mlogo"/></svg>
        </aside>

        <section class="panel">
            <nav class="menu">
                <a href="#">视图</a><a href="#">着色</a><a href="#">照明</a><a href="#">显示</a><a href="#">渲染器</a><a href="#">面板</a>
            </nav>
            <div class="panelbar">
                <i class="bar"></i>
                <button title="选择摄影机"><svg><use href="#cam"/></svg></button>
                <button title="锁定摄影机"><svg><use href="#camlock"/></svg></button>
                <button title="摄影机属性"><svg><use href="#camset"/></svg></button>
                <button title="书签"><svg><use href="#bkmk"/></svg></button>
                <button title="图像平面"><svg><use href="#imgp"/></svg></button>
                <button title="平移/缩放"><svg><use href="#pan"/></svg></button>
                <button title="油性铅笔"><svg><use href="#gp"/></svg></button>
                <i class="bar"></i>
                <button class="on" title="栅格"><svg><use href="#grid"/></svg></button>
                <button title="胶片门"><svg><use href="#film"/></svg></button>
                <button title="分辨率门"><svg><use href="#resg"/></svg></button>
                <button class="off" title="门遮罩"><svg><use href="#gmask"/></svg></button>
                <button title="区域图"><svg><use href="#fchart"/></svg></button>
                <button title="安全动作"><svg><use href="#safea"/></svg></button>
                <button title="安全标题"><svg><use href="#safet"/></svg></button>
                <i class="bar"></i>
                <button title="线框"><svg><use href="#wire"/></svg></button>
                <button class="on" title="着色"><svg><use href="#shade"/></svg></button>
                <button title="默认材质"><svg><use href="#mat"/></svg></button>
                <button title="着色对象上的线框"><svg><use href="#wshade"/></svg></button>
                <button title="带纹理"><svg><use href="#tex"/></svg></button>
                <button title="使用所有灯光"><svg><use href="#bulb"/></svg></button>
                <button title="阴影"><svg><use href="#shadow"/></svg></button>
                <i class="bar"></i>
                <button title="环境光遮挡"><svg><use href="#ao"/></svg></button>
                <button title="运动模糊"><svg><use href="#mblur"/></svg></button>
                <button title="抗锯齿"><svg><use href="#aa"/></svg></button>
                <button class="off" title="景深"><svg><use href="#dof"/></svg></button>
                <i class="bar"></i>
                <button title="隔离选择"><svg><use href="#iso"/></svg></button>
                <i class="bar"></i>
                <button title="X 射线"><svg><use href="#xr1"/></svg></button>
                <button title="X 射线活动组件"><svg><use href="#xr2"/></svg></button>
                <button title="X 射线关节"><svg><use href="#xr3"/></svg></button>
                <i class="bar"></i>
                <button title="曝光"><svg><use href="#expo"/></svg></button>
                <input class="num" type="text" value="0.00" aria-label="曝光">
                <button title="Gamma"><svg><use href="#gam"/></svg></button>
                <input class="num" type="text" value="1.00" aria-label="Gamma">
                <button class="on" title="颜色管理"><svg><use href="#on"/></svg></button>
                <div class="combo gamma"><select aria-label="视图变换"><option>sRGB gamma</option></select></div>
            </div>
            <svg class="view" viewBox="0 0 794 596">
                <g id="floor"></g>
                <path d="M21 574V565" stroke="#1c1"/><path d="M21 574l9 2" stroke="#d22"/><path d="M21 574l-7 2" stroke="#11c"/>
                <g class="axis"><text x="19" y="563" fill="#1c1">y</text><text x="28" y="578" fill="#d22">x</text><text x="11" y="578" fill="#11c">z</text></g>
                <text class="cam-name" x="378" y="588">persp</text>
            </svg>
        </section>

        <aside class="channel">
            <div class="cb-icons">
                <button title="操纵器"><svg class="i14"><use href="#cb1"/></svg></button>
                <button title="速度"><svg class="i14"><use href="#cb2"/></svg></button>
                <button title="超图"><svg class="i14"><use href="#cb3"/></svg></button>
            </div>
            <nav class="menu"><a href="#">通道</a><a href="#">编辑</a><a href="#">对象</a><a href="#">显示</a></nav>
            <div class="well"></div>
            <div class="splitter"></div>
            <div class="layers">
                <div class="tabs"><button class="active">显示</button><button>动画</button></div>
                <nav class="menu"><a href="#">层</a><a href="#">选项</a><a href="#">帮助</a></nav>
                <div class="layer-icons">
                    <button title="上移"><svg class="i16"><use href="#lup"/></svg></button>
                    <button title="下移"><svg class="i16"><use href="#ldown"/></svg></button>
                    <button title="新建层"><svg class="i16"><use href="#ladd"/></svg></button>
                    <button title="从选定对象新建层"><svg class="i16"><use href="#lsel"/></svg></button>
                </div>
                <div class="layer-list"></div>
                <div class="hscroll"><b class="left"></b><div class="thumb"></div><b class="right"></b></div>
            </div>
        </aside>

        <div class="sidetabs">
            <button class="active">通道盒/层编辑器</button>
            <button>建模工具包</button>
            <button>属性编辑器</button>
        </div>
    </main>

    <div class="timebar">
        <div class="timeline" id="timeline"><span class="now">1</span></div>
        <input class="field" type="text" value="1" aria-label="当前帧">
        <div class="playback">
            <button title="转到开头"><svg><use href="#pstart"/></svg></button>
            <button title="后退一帧"><svg><use href="#pback"/></svg></button>
            <button title="上一关键帧"><svg><use href="#pkeyb"/></svg></button>
            <button title="向后播放"><svg><use href="#prev"/></svg></button>
            <button title="向前播放"><svg><use href="#play"/></svg></button>
            <button title="下一关键帧"><svg><use href="#pkeyf"/></svg></button>
            <button title="前进一帧"><svg><use href="#pfwd"/></svg></button>
            <button title="转到结尾"><svg><use href="#pend"/></svg></button>
        </div>
    </div>

    <div class="rangebar">
        <input class="field" type="text" value="1" aria-label="动画开始">
        <input class="field" type="text" value="1" aria-label="播放开始">
        <div class="range"><div class="range-in"><b></b><span>1</span><span class="end">120</span><b></b></div></div>
        <input class="field" type="text" value="120" aria-label="播放结束">
        <input class="field" type="text" value="200" aria-label="动画结束">
        <button class="fresh key" title="自动关键帧"><svg><use href="#key"/></svg></button>
        <i class="bar"></i>
        <i class="caret"></i>
        <input class="box" type="text" value="无角色集" aria-label="角色集">
        <i class="caret"></i>
        <input class="box" type="text" value="无动画层" aria-label="动画层">
        <i class="bar"></i>
        <div class="combo fps"><select aria-label="帧速率"><option>24 fps</option></select></div>
        <button title="循环"><svg><use href="#loop"/></svg></button>
        <button class="on" title="缓存播放"><svg><use href="#cache"/></svg></button>
        <i class="bar"></i>
        <button class="fresh" title="声音"><svg><use href="#sound"/></svg></button>
        <button title="时间"><svg><use href="#clock"/></svg></button>
        <button title="首选项"><svg><use href="#run"/></svg></button>
    </div>

    <div class="cmdbar">
        <label for="mel">MEL</label>
        <input class="field" id="mel" type="text">
        <i class="grip"></i>
        <input class="field out" type="text" readonly aria-label="结果">
        <button title="脚本编辑器"><svg class="i16"><use href="#script"/></svg></button>
    </div>
    <footer class="helpline"></footer>

    <div class="mark mark-left">
        <svg viewBox="0 0 42 26"><path d="M1 6l4-2v20" stroke-width="4"/><circle cx="15" cy="16" r="7" stroke-width="4"/><path d="M17 3v12" stroke-width="2"/><circle cx="24" cy="6" r="5" stroke-width="2"/><circle cx="33" cy="6" r="5" stroke-width="2"/></svg>
        <span>大数跨境</span>
    </div>
    <div class="mark mark-right">
        <svg viewBox="0 0 40 34"><path class="bubble" d="M15 0c8 0 14 5 14 12l-1 1c-7 0-13 5-12 12h-7l-5 2 1-4C2 21 0 17 0 13 0 5 7 0 15 0z"/><path class="bubble" d="M28 12c7 0 12 5 12 10 0 4-2 6-4 7l1 4-4-2c-9 2-16-3-16-9s5-10 11-10z"/><circle cx="9" cy="9" r="2"/><circle cx="19" cy="9" r="2"/><circle cx="24" cy="19" r="2"/><circle cx="32" cy="19" r="2"/></svg>
        <span>公众号<span class="mid">·</span>CASS软件安装管家助手</span>
    </div>
</div>

<script src="script.js"></script>
</body>
</html>
```

FILE: styles.css
```css
* {
    box-sizing: border-box;
}
body {
    margin: 0;
    background: #444;
    color: #ccc;
    font: 10px/14px "Open Sans", "Noto Sans CJK SC", sans-serif;
}
button, input, select {
    font: inherit;
    color: inherit;
    margin: 0;
    padding: 0;
    border: 0;
    background: none;
    border-radius: 0;
}
button {
    display: flex;
    align-items: center;
    justify-content: center;
}
a {
    color: inherit;
    text-decoration: none;
}
.defs {
    display: none;
}
.en {
    font-size: 11px;
}

/* icon paints */
.g { fill: #c3c3c3; }
.o { fill: #de9350; }
.t { fill: #45adb6; }
.d { fill: #3c3c3c; }
.bg { fill: #444; }
.lg, .lo, .lt, .ld { fill: none; }
.lg { stroke: #c3c3c3; }
.lo { stroke: #de9350; }
.lt { stroke: #45adb6; }
.ld { stroke: #493a2e; }
.dks { stroke: #444; }
.w2 { stroke-width: 2; }
.w3 { stroke-width: 3; }
.dash { stroke-dasharray: 4 2; }
.dash1 { stroke-dasharray: 2 1; }
.clapd { stroke-dasharray: 2 1; }
.i14 { width: 14px; height: 14px; }
.i16 { width: 16px; height: 16px; }

.window {
    position: relative;
    display: flex;
    flex-direction: column;
    min-height: 100vh;
    border-top: 1px solid #4a86ba;
    border-left: 1px solid #2f6792;
}

/* title */
.titlebar {
    display: flex;
    align-items: center;
    height: 25px;
    padding-left: 6px;
    background: #fff;
    color: #111;
}
.titlebar h1 {
    flex: 1;
    margin: 0 0 0 4px;
    font-size: 10px;
    font-weight: normal;
}
.winbtns {
    display: flex;
}
.winbtns button {
    width: 38px;
    height: 24px;
}
.winbtns svg {
    width: 10px;
    height: 10px;
    fill: none;
    stroke: #222;
}

/* menus */
.menu {
    display: flex;
    gap: 13px;
    white-space: nowrap;
}
.menubar {
    display: flex;
    align-items: center;
    height: 22px;
    padding-left: 7px;
}
.menubar .menu {
    flex: 1;
}
.menubar .menu, .menubar label {
    padding-bottom: 2px;
}
.combo {
    position: relative;
    display: flex;
    background: #5d5d5d;
}
.combo select {
    width: 100%;
    padding-left: 2px;
    appearance: none;
}
.combo::after {
    content: "";
    position: absolute;
    right: 4px;
    top: 50%;
    width: 8px;
    height: 4px;
    margin-top: -2px;
    background: #ccc;
    clip-path: polygon(0 0, 100% 0, 50% 100%);
    pointer-events: none;
}
.combo::before {
    content: "";
    position: absolute;
    right: 16px;
    height: 100%;
    border-left: 1px solid #4a4a4a;
}
.workspace {
    width: 136px;
    height: 18px;
    margin-left: 6px;
    font-size: 11px;
}
.lock {
    width: 23px;
}

/* status line */
.status {
    display: flex;
    align-items: center;
    height: 25px;
    padding: 0 2px 0 11px;
    border-bottom: 1px solid #333;
}
.status > .bar, .status > button {
    flex: 1;
    height: 18px;
}
.status svg {
    width: 19px;
    height: 19px;
    flex: none;
}
.status > .login {
    flex: none;
    width: 70px;
    height: 18px;
    justify-content: flex-start;
    background: #5d5d5d;
    color: #fff;
}
.login svg {
    width: 16px;
    height: 16px;
}
.mode {
    width: 83px;
    height: 18px;
}
.on, .status > .on {
    background: #5285a6;
}
.bar {
    background: linear-gradient(#999, #999) center / 2px 10px no-repeat, linear-gradient(#777, #777) center / 1px 16px no-repeat;
}
.tip {
    background: linear-gradient(#999, #999) 8px center / 1px 14px no-repeat, linear-gradient(#777, #777) 9px center / 2px 6px no-repeat;
}
.caret {
    width: 16px;
    height: 4px;
    background: #999;
    clip-path: polygon(5px 0, 11px 0, 8px 100%);
}
.box {
    width: 84px;
    height: 18px;
    padding: 0 4px;
    border: 1px solid #555;
    border-radius: 2px;
}

/* shelf */
.shelf {
    display: flex;
    height: 62px;
    padding: 2px 1px 4px 12px;
    border-bottom: 2px solid #363636;
}
.shelf-side {
    display: flex;
    flex-direction: column;
    justify-content: space-around;
    align-items: center;
    width: 16px;
    background: #373737;
}
.shelf-side svg {
    width: 10px;
    height: 10px;
}
.dash-btn {
    width: 9px;
    height: 4px;
    background: #888;
}
.shelf-main {
    flex: 1;
    min-width: 0;
    display: flex;
    flex-direction: column;
}
.tabs {
    display: flex;
    gap: 1px;
    background: #373737;
    color: #999;
}
.tabs button {
    height: 16px;
    padding: 0 9px;
    border: 1px solid #303030;
    border-bottom: 0;
    border-radius: 2px 2px 0 0;
    background: #3a3a3a;
    white-space: nowrap;
}
.tabs .active {
    background: #444;
    border-color: #444;
    color: #eee;
}
.shelf .tabs {
    padding: 1px 0 0 3px;
}
.shelf .tabs .active {
    font-weight: bold;
}
.shelf .tabs .en {
    padding: 0 8px;
}
.tools {
    display: flex;
    flex: 1;
    padding: 0 3px 0 8px;
}
.shelf-icons {
    display: flex;
    flex: 1;
    align-items: center;
    min-width: 0;
}
.shelf-icons button {
    position: relative;
    flex: 3 1 0;
    min-width: 0;
    height: 28px;
}
.shelf-icons svg {
    width: 22px;
    height: 22px;
    flex: none;
}
.shelf-icons i {
    flex: 1 1 0;
    height: 30px;
    background: linear-gradient(#999, #999) center / 2px 100% no-repeat;
}
.more::after {
    content: "";
    position: absolute;
    right: 3px;
    bottom: 2px;
    border: 2px solid #ddd;
    border-top-color: transparent;
    border-left-color: transparent;
}
.shelf-icons .type {
    color: #de9350;
    font: bold 27px/28px "Liberation Serif", serif;
}
.svgtag {
    width: 20px;
    height: 20px;
    background: #de9350;
    color: #3c3c3c;
    font: bold 10px/18px "Open Sans", sans-serif;
}
.shelf-icons .freeze {
    flex-direction: column;
    color: #45adb6;
    font: bold 10px/12px "Open Sans", sans-serif;
}
.shelf-icons .freeze svg {
    height: 15px;
}
.fresh {
    background:
        linear-gradient(#2c2, #2c2) 0 0 / 4px 1px no-repeat, linear-gradient(#2c2, #2c2) 0 100% / 4px 1px no-repeat,
        linear-gradient(#2c2, #2c2) 100% 0 / 4px 1px no-repeat, linear-gradient(#2c2, #2c2) 100% 100% / 4px 1px no-repeat;
    border: solid #2c2;
    border-width: 0 1px;
}
.scroller {
    position: relative;
    z-index: 1;
    display: flex;
    flex-direction: column;
    align-items: center;
    justify-content: space-between;
    width: 11px;
    height: 30px;
    margin: 3px 0 0 -6px;
    padding: 3px 0;
    background: #2b2b2b;
}
.up, .down {
    width: 8px;
    height: 4px;
    background: #bbb;
    clip-path: polygon(50% 0, 100% 100%, 0 100%);
}
.down {
    clip-path: polygon(0 0, 100% 0, 50% 100%);
}
.dot {
    width: 8px;
    height: 8px;
    border-radius: 4px;
    background: #5d5d5d;
}

/* work area */
.work {
    display: flex;
    flex: 1;
    padding-top: 1px;
}
.toolbox {
    display: flex;
    flex-direction: column;
    align-items: center;
    width: 38px;
    padding: 8px 2px 3px;
    border-right: 2px solid #363636;
}
.toolbox button {
    width: 31px;
    height: 31px;
}
.toolbox svg {
    width: 24px;
    height: 24px;
}
.toolbox hr {
    width: 31px;
    height: 2px;
    margin: 67px 0 4px;
    border: 0;
    background: #999;
}
.toolbox .biglogo {
    width: 28px;
    height: 26px;
    margin-top: auto;
}
.panel {
    flex: 1;
    min-width: 0;
    display: flex;
    flex-direction: column;
    margin: 0 5px 1px 2px;
    border: 1px solid #808080;
}
.panel .menu {
    height: 18px;
    padding: 2px 0 0 8px;
}
.panelbar {
    display: flex;
    align-items: center;
    height: 18px;
}
.panelbar button, .panelbar svg {
    width: 16px;
    height: 16px;
    flex: none;
}
.panelbar .bar {
    width: 10px;
    height: 16px;
    flex: none;
}
.panelbar .off {
    background: #3a3a3a;
}
.num {
    width: 31px;
    height: 14px;
    flex: none;
    padding-left: 4px;
    border-radius: 2px;
    background: #2b2b2b;
    font-size: 11px;
}
.panelbar .num + button {
    margin: 0 2px;
}
.gamma {
    flex: 1;
    height: 16px;
    font-size: 11px;
}
.gamma::before {
    right: 9px;
}
.gamma::after {
    right: 0;
}
.view {
    display: block;
    flex: 1 1 0;
    width: 100%;
    height: 0;
    min-height: 0;
    background: #5d5d5d;
}
.view path, .view line {
    fill: none;
}
.view line {
    stroke: #454545;
    stroke-width: 1;
}
.view .main {
    stroke: #404040;
    stroke-width: 2;
}
.axis {
    font: bold 9px "DejaVu Sans", sans-serif;
}
.cam-name {
    fill: #fff;
    font: bold 8px "DejaVu Sans", sans-serif;
}

/* channel box */
.channel {
    display: flex;
    flex-direction: column;
    width: 219px;
    border-left: 1px solid #363636;
    padding: 0 3px 0 2px;
}
.cb-icons {
    display: flex;
    justify-content: flex-end;
    height: 17px;
}
.cb-icons button {
    width: 18px;
}
.channel > .menu {
    height: 22px;
    padding: 3px 0 0 6px;
}
.well {
    flex: 1;
    background: #282828;
}
.splitter {
    height: 11px;
    background: repeating-linear-gradient(90deg, #888 0 1px, #444 1px 3px) center 2px / 72px 1px no-repeat;
}
.layers {
    display: flex;
    flex-direction: column;
    height: 177px;
    margin-bottom: 2px;
    border: 1px solid #363636;
}
.layers .menu {
    height: 20px;
    padding: 3px 0 0 8px;
}
.layer-icons {
    display: flex;
    justify-content: flex-end;
    gap: 1px;
    height: 22px;
    padding: 0 2px 4px 0;
}
.layer-icons button {
    width: 20px;
}
.layer-list {
    flex: 1;
    margin: 0 2px;
    background: #262626;
}
.hscroll {
    display: flex;
    align-items: center;
    height: 10px;
    margin: 0 2px 2px;
    padding: 0 3px;
    background: #363636;
}
.thumb {
    width: 130px;
    height: 8px;
    margin: 0 auto 0 4px;
    border-radius: 4px;
    background: #5d5d5d;
}
.left, .right {
    width: 4px;
    height: 8px;
    background: #bbb;
    clip-path: polygon(0 50%, 100% 0, 100% 100%);
}
.right {
    clip-path: polygon(0 0, 100% 50%, 0 100%);
}
.sidetabs {
    display: flex;
    flex-direction: column;
    gap: 2px;
    width: 17px;
    background: #373737;
}
.sidetabs button {
    padding: 9px 0;
    writing-mode: vertical-rl;
    text-orientation: sideways;
    background: #3a3a3a;
    border-bottom: 1px solid #2b2b2b;
    color: #888;
}
.sidetabs .active {
    background: #444;
    color: #eee;
}

/* time slider */
.timebar, .rangebar, .cmdbar {
    display: flex;
    align-items: center;
    padding-left: 11px;
    border-top: 1px solid #363636;
}
.timebar, .rangebar, .cmdbar, .status, .shelf {
    background: radial-gradient(circle, #777 0 1px, transparent 1px) 3px center / 3px 3px repeat-y;
}
.timebar {
    height: 36px;
}
.rangebar {
    height: 34px;
    padding: 0 4px 0 12px;
}
.cmdbar {
    height: 28px;
}
.timeline {
    display: flex;
    flex: 1;
    position: relative;
    height: 26px;
    overflow: hidden;
    background: #2b2b2b;
    color: #888;
    font-size: 11px;
}
.timeline .gap {
    flex: 46 1 0;
}
.tick {
    flex: 50 1 0;
    min-width: 0;
    padding-left: 1px;
    background: linear-gradient(#999, #999) 0 15px / 2px 8px no-repeat;
    line-height: 14px;
}
.tick:last-child {
    flex-grow: 14;
}
.now {
    position: absolute;
    left: 5px;
    width: 5px;
    height: 100%;
    background: #5d5d5d;
    color: #eee;
    line-height: 26px;
}
.field {
    width: 74px;
    height: 22px;
    padding: 0 5px;
    border-radius: 2px;
    background: #2b2b2b;
    font-size: 11px;
}
.timebar .field {
    height: 18px;
    margin: 2px 5px 0 6px;
}
.playback {
    display: flex;
    width: 156px;
    margin-right: 6px;
}
.playback button {
    flex: 1;
}
.playback svg {
    width: 18px;
    height: 18px;
}

/* range slider */
.rangebar .field {
    margin-right: 7px;
}
.range {
    flex: 1;
    height: 22px;
    margin-right: 6px;
    padding: 1px;
    background: #363636;
}
.range-in {
    display: flex;
    align-items: center;
    gap: 4px;
    width: 64%;
    height: 20px;
    padding: 0 3px;
    border-radius: 3px;
    background: #5d5d5d;
    font-size: 11px;
}
.range-in b {
    width: 13px;
    height: 14px;
    border-radius: 3px;
    background: #999;
}
.range-in .end {
    margin-left: auto;
}
.rangebar button {
    width: 20px;
    height: 20px;
    flex: none;
    margin-right: 4px;
}
.rangebar svg {
    width: 18px;
    height: 18px;
    flex: none;
}
.rangebar .key {
    margin-left: 6px;
}
.rangebar .bar {
    width: 12px;
    height: 18px;
}
.rangebar .box {
    margin: 0 5px 0 3px;
}
.fps {
    width: 88px;
    height: 18px;
    margin: 0 7px 0 5px;
    font-size: 11px;
}

/* command line */
.cmdbar label {
    width: 39px;
    padding-left: 8px;
}
.cmdbar .field {
    width: 245px;
    height: 20px;
}
.cmdbar .out {
    flex: 1;
}
.cmdbar button {
    width: 26px;
}
.grip {
    width: 7px;
    height: 9px;
    background: repeating-linear-gradient(#777 0 1px, transparent 1px 3px) center / 2px 100% no-repeat;
}
.helpline {
    height: 5px;
    border-top: 1px solid #363636;
}

/* overlay marks */
.mark {
    position: absolute;
    display: flex;
    align-items: center;
    color: rgba(205, 205, 205, 0.85);
    font-family: "Noto Sans CJK SC", sans-serif;
    white-space: nowrap;
    pointer-events: none;
}
.mark-left {
    left: 8px;
    bottom: 6px;
    height: 28px;
    font-size: 22px;
    font-weight: bold;
}
.mark-left svg {
    width: 42px;
    height: 26px;
    fill: none;
    stroke: rgba(205, 205, 205, 0.85);
}
.mark-right {
    right: 33px;
    bottom: 26px;
    height: 36px;
    gap: 8px;
    font-size: 30px;
}
.mark-right svg {
    width: 40px;
    height: 34px;
    fill: #444;
}
.mid {
    display: inline-block;
    width: 32px;
    text-align: center;
    font-family: "Open Sans", sans-serif;
}
.mark .bubble {
    fill: #bbb;
}
```

FILE: script.js
```js
// frame numbers on the time slider
const timeline = document.getElementById("timeline");
const gap = document.createElement("span");
gap.className = "gap";
timeline.appendChild(gap);
for (let f = 5; f <= 120; f += 5) {
    const tick = document.createElement("span");
    tick.className = "tick";
    tick.textContent = f;
    timeline.appendChild(tick);
}

// ground grid in perspective, u and v run from -12 to 12
const floor = document.getElementById("floor");

function project(u, v) {
    const s = (u + v) / 24;
    const d = (u - v) / 24;
    const w = 1 - 0.3377 * s;
    return [397 + 292 * d / w, (298 + 35.8 * s) / w];
}

function addLine(a, b, main) {
    const line = document.createElementNS("http://www.w3.org/2000/svg", "line");
    line.setAttribute("x1", a[0]);
    line.setAttribute("y1", a[1]);
    line.setAttribute("x2", b[0]);
    line.setAttribute("y2", b[1]);
    if (main) line.setAttribute("class", "main");
    floor.appendChild(line);
}

for (let i = -12; i <= 12; i++) {
    addLine(project(i, -12), project(i, 12), i === 0);
    addLine(project(-12, i), project(12, i), i === 0);
}
```
